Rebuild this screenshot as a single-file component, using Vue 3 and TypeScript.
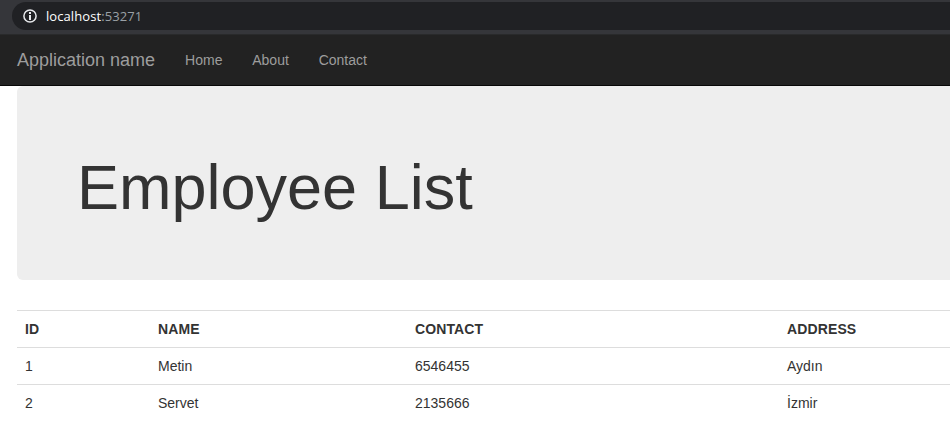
<script setup lang="ts">
interface Employee {
  id: number
  name: string
  contact: string
  address: string
}

const links: string[] = ['Home', 'About', 'Contact']
const employees: Employee[] = [
  { id: 1, name: 'Metin', contact: '6546455', address: 'Aydın' },
  { id: 2, name: 'Servet', contact: '2135666', address: 'İzmir' },
]
</script>

<template>
  <div class="window">
    <div class="toolbar">
      <div class="omnibox">
        <svg class="info" viewBox="0 0 14 14" width="14" height="14">
          <circle cx="7" cy="7" r="6.1" fill="none" stroke="currentColor" stroke-width="1.5" />
          <path d="M6 3h2v2H6zM6 6h2v5H6z" fill="currentColor" />
        </svg>
        <span class="url">localhost<span class="port">:53271</span></span>
      </div>
    </div>
    <nav class="navbar">
      <a class="brand">Application name</a>
      <a v-for="link in links" :key="link" class="link">{{ link }}</a>
    </nav>
    <main class="content">
      <header class="jumbotron">
        <h1>Employee List</h1>
      </header>
      <table class="table">
        <colgroup>
          <col class="col-id" />
          <col class="col-name" />
          <col class="col-contact" />
          <col />
        </colgroup>
        <thead>
          <tr><th>ID</th><th>NAME</th><th>CONTACT</th><th>ADDRESS</th></tr>
        </thead>
        <tbody>
          <tr v-for="e in employees" :key="e.id">
            <td>{{ e.id }}</td>
            <td>{{ e.name }}</td>
            <td>{{ e.contact }}</td>
            <td>{{ e.address }}</td>
          </tr>
        </tbody>
      </table>
    </main>
  </div>
</template>

<style>
body {
  margin: 0;
  background: #fff;
}
</style>

<style scoped>
.window {
  box-sizing: border-box;
  height: 436px;
  overflow: hidden;
  font: 14px/20px "Liberation Sans", Arial, sans-serif;
  color: #333;
}
.toolbar {
  box-sizing: border-box;
  height: 34px;
  padding: 2px 0 0 12px;
  background: #35363a;
}
.omnibox {
  display: flex;
  align-items: center;
  gap: 9px;
  height: 28px;
  padding-left: 11px;
  border-radius: 14px 0 0 14px;
  background: #202124;
}
.info {
  color: #e8eaed;
}
.url {
  font-family: "Open Sans", sans-serif;
  font-size: 13px;
  letter-spacing: 0.08px;
  color: #fff;
}
.port {
  color: #9aa0a6;
}
.navbar {
  box-sizing: border-box;
  display: flex;
  align-items: center;
  height: 52px;
  padding-left: 17px;
  background: #222;
  border-top: 1px solid #292a2b;
  border-bottom: 1px solid #080808;
  color: #9d9d9d;
}
.brand {
  margin-right: 15px;
  font-size: 18px;
}
.link {
  padding: 0 14.8px 0 15px;
}
.content {
  padding-left: 17px;
}
.jumbotron {
  box-sizing: border-box;
  height: 194px;
  margin-bottom: 30px;
  padding: 67px 60px 0;
  border-radius: 6px 0 0 6px;
  background: #eee;
}
h1 {
  margin: 0;
  font-size: 63px;
  font-weight: 500;
  line-height: 69px;
}
.table {
  width: 100%;
  table-layout: fixed;
  border-collapse: collapse;
}
.col-id {
  width: 133px;
}
.col-name {
  width: 257px;
}
.col-contact {
  width: 372px;
}
th,
td {
  padding: 8px;
  border-top: 1px solid #ddd;
  text-align: left;
}
th {
  letter-spacing: 0.12px;
}
</style>
